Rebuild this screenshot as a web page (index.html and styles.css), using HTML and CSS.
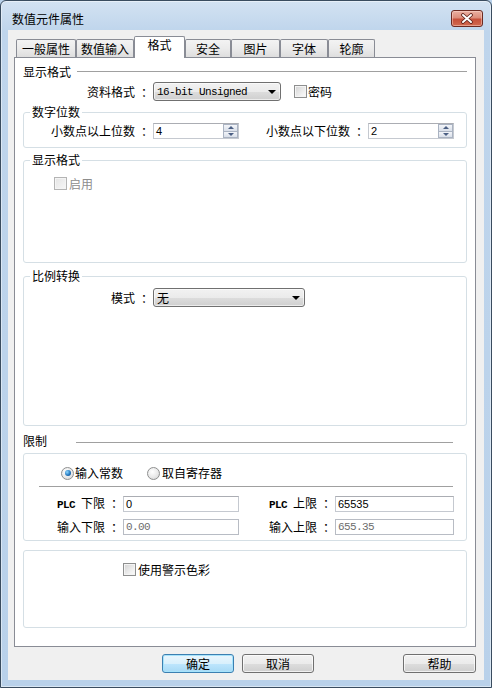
FILE: index.html
```html
<!DOCTYPE html>
<html lang="zh-CN">
<head>
<meta charset="utf-8">
<title>数值元件属性</title>
<link rel="stylesheet" href="styles.css">
</head>
<body>
<div class="win">
  <div class="titlebar">
    <span class="title">数值元件属性</span>
    <div class="close">
      <svg width="14" height="11" viewBox="0 0 14 11">
        <path d="M3 2 L11 9 M11 2 L3 9" stroke="#5a1f18" stroke-width="3.6" stroke-linecap="round" fill="none"/>
        <path d="M3 2 L11 9 M11 2 L3 9" stroke="#ffffff" stroke-width="2" stroke-linecap="round" fill="none"/>
      </svg>
    </div>
  </div>
  <div class="client">
    <div class="tabs">
      <div class="tab w1">一般属性</div>
      <div class="tab w2">数值输入</div>
      <div class="tab sel w3">格式</div>
      <div class="tab w4">安全</div>
      <div class="tab w5">图片</div>
      <div class="tab w6">字体</div>
      <div class="tab w7">轮廓</div>
    </div>
    <div class="panel">
      <div class="heading h-top"><span>显示格式</span><i class="rule r-top"></i></div>
      <div class="row r-fmt">
        <span class="lbl l-fmt">资料格式&ensp;：</span>
        <div class="select s-fmt"><span class="mono">16-bit Unsigned</span><i class="arrow"></i></div>
        <span class="chk c-pwd"></span><span class="chk-text">密码</span>
      </div>
      <fieldset class="grp g-digits">
        <legend>数字位数</legend>
        <div class="row r-digits">
          <span class="lbl l-dig">小数点以上位数&ensp;：</span>
          <div class="spin"><span class="val num">4</span><div class="spinbtn"><span class="half"><i class="up"></i></span><span class="half"><i class="dn"></i></span></div></div>
          <span class="lbl l-dig">小数点以下位数&ensp;：</span>
          <div class="spin"><span class="val num">2</span><div class="spinbtn"><span class="half"><i class="up"></i></span><span class="half"><i class="dn"></i></span></div></div>
        </div>
      </fieldset>
      <fieldset class="grp g-show">
        <legend>显示格式</legend>
        <div class="body b-show">
          <div class="row r-enable"><span class="chk dis"></span><span class="chk-text dis-text">启用</span></div>
        </div>
      </fieldset>
      <fieldset class="grp g-scale">
        <legend>比例转换</legend>
        <div class="body b-scale">
          <div class="row r-mode">
            <span class="lbl l-dig">模式&ensp;：</span>
            <div class="select s-mode"><span>无</span><i class="arrow"></i></div>
          </div>
        </div>
      </fieldset>
      <div class="heading h-lim"><span>限制</span><i class="rule r-lim"></i></div>
      <fieldset class="grp g-limit">
        <div class="body b-limit">
          <div class="row r-radio">
            <span class="radio on r1"></span><span class="radio-text">输入常数</span>
            <span class="radio r2"></span><span class="radio-text t2">取自寄存器</span>
          </div>
          <div class="sep"></div>
          <div class="row r-lim1">
            <span class="lbl l-lim"><span class="mono plc">PLC</span>&ensp;下限&ensp;：</span>
            <div class="edit e-left"><span class="num">0</span></div>
            <span class="lbl l-lim2"><span class="mono plc">PLC</span>&ensp;上限&ensp;：</span>
            <div class="edit e-right"><span class="num">65535</span></div>
          </div>
          <div class="row r-lim2">
            <span class="lbl l-lim">输入下限&ensp;：</span>
            <div class="edit e-left ro"><span class="mono gray">0.00</span></div>
            <span class="lbl l-lim2">输入上限&ensp;：</span>
            <div class="edit e-right ro"><span class="mono gray">655.35</span></div>
          </div>
        </div>
      </fieldset>
      <fieldset class="grp g-warn">
        <div class="body b-warn">
          <div class="row r-warn"><span class="chk c-warn"></span><span class="chk-text">使用警示色彩</span></div>
        </div>
      </fieldset>
    </div>
    <div class="buttons">
      <div class="btn default b-ok">确定</div>
      <div class="btn b-cancel">取消</div>
      <div class="btn b-help">帮助</div>
    </div>
  </div>
</div>
</body>
</html>
```

FILE: styles.css
```css
* { box-sizing: border-box; margin: 0; padding: 0; }
html, body { width: 492px; height: 688px; overflow: hidden; }
body {
  font-family: "Noto Sans CJK SC", "Noto Sans", sans-serif;
  font-size: 12px;
  line-height: 14px;
  color: #000;
  background: #b9d1ea;
}
.win {
  width: 492px;
  height: 688px;
  border: 1px solid #3a4c5f;
  border-radius: 6px 6px 0 0;
  background: linear-gradient(180deg, #d3e2f2 0, #bfd5ec 30px, #b9d1ea 100%);
  box-shadow: inset 0 0 0 1px rgba(255,255,255,.45);
  display: flex;
  flex-direction: column;
}
.titlebar { height: 29px; flex: none; display: flex; align-items: flex-start; }
.title { flex: 1; padding: 11px 0 0 11px; color: #000; }
.close {
  width: 32px; height: 17px; margin: 9px 8px 0 0;
  border: 1px solid #6b2a22; border-radius: 3px;
  background: linear-gradient(180deg, #eab0a2 0, #dc8d7b 45%, #c6503a 55%, #d26a50 100%);
  box-shadow: inset 0 0 0 1px rgba(255,225,215,.45);
  display: flex; align-items: center; justify-content: center;
}
.client {
  flex: 1;
  margin: 0 7px 7px;
  background: #f0f0f0;
  padding: 6px 8px 0 6px;
  display: flex;
  flex-direction: column;
}
.tabs {
  height: 21px; flex: none;
  display: flex; align-items: flex-end;
  padding-left: 2px;
  position: relative; z-index: 1;
}
.tab {
  height: 18px;
  border: 1px solid #898c95; border-bottom: none;
  border-radius: 2px 2px 0 0;
  background: linear-gradient(180deg, #f3f3f3 0, #ebebeb 50%, #dedede 100%);
  text-align: center; line-height: 17px;
  flex: none;
}
.tab.sel { height: 22px; margin-bottom: -1px; background: #fff; line-height: 14px; padding-top: 1px; }
.w1 { width: 60px; }
.w2 { width: 58px; }
.w3 { width: 51px; }
.w4 { width: 46px; }
.w5 { width: 49px; }
.w6 { width: 48px; }
.w7 { width: 47px; }

.panel {
  height: 590px; flex: none;
  border: 1px solid #898c95;
  background: #fff;
  padding: 0 8px;
  display: flex; flex-direction: column;
}
.heading { height: 14px; display: flex; align-items: center; flex: none; }
.h-top { margin-top: 7px; }
.h-lim { margin-top: 8px; }
.rule { flex: 1; height: 2px; border-top: 1px solid #a0a0a0; border-bottom: 1px solid #fff; }
.r-top { margin-left: 6px; }
.r-lim { margin-left: 29px; margin-right: 14px; margin-top: 3px; }

.row { display: flex; align-items: center; flex: none; }
.lbl { flex: none; text-align: right; white-space: nowrap; }
.mono { font-family: "Liberation Mono", monospace; font-size: 11px; letter-spacing: -0.6px; }
.plc { font-weight: bold; font-size: 11px; }
.num { font-family: "Liberation Sans", Arial, sans-serif; font-size: 11px; }
.gray { color: #6d6d6d; }

.r-fmt { margin-top: 3px; height: 19px; }
.l-fmt { width: 130px; }
.select {
  height: 19px; flex: none;
  border: 1px solid #707070; border-radius: 3px;
  background: linear-gradient(180deg, #f2f2f2 0, #ebebeb 50%, #dddddd 51%, #cfcfcf 100%);
  box-shadow: inset 0 0 0 1px rgba(255,255,255,.6);
  display: flex; align-items: center;
  padding: 0 4px 0 3px;
}
.select > span:first-child { flex: 1; line-height: 16px; }
.s-fmt { width: 128px; }
.s-mode { width: 152px; }
.arrow { width: 0; height: 0; border-left: 4px solid transparent; border-right: 4px solid transparent; border-top: 4px solid #000; flex: none; }

.chk {
  width: 13px; height: 13px; flex: none;
  border: 1px solid #8e8f8f;
  background: linear-gradient(135deg, #d2d2d2 0, #f2f2f2 70%, #fbfbfb 100%);
  box-shadow: inset 0 0 0 1px #f4f4f4;
}
.chk.dis { border-color: #b4b4b4; background: linear-gradient(135deg, #e4e4e4, #f7f7f7); }
.chk-text { margin-left: 1px; white-space: nowrap; }
.dis-text { color: #8d8d8d; margin-left: 2px; }
.c-pwd { margin-left: 13px; }

.grp { border: 1px solid #d5dfe5; border-radius: 3px; margin: 0; padding: 0; min-width: 0; flex: none; }
.grp legend { margin-left: 6px; padding: 0 2px; line-height: 14px; }

.g-digits { margin-top: 4px; }
.r-digits { margin: 4px 0 8px; height: 16px; }
.l-dig { width: 129px; }
.spin, .edit {
  height: 16px; flex: none;
  border: 1px solid #c5c9d0; border-top-color: #abadb3;
  background: #fff;
  display: flex; align-items: center;
}
.spin { width: 86px; }
.val { flex: 1; padding-left: 2px; line-height: 14px; }
.spinbtn { width: 15px; height: 14px; display: flex; flex-direction: column; flex: none; }
.half {
  flex: 1; display: flex; align-items: center; justify-content: center;
  border: 1px solid #aab3c2;
  background: linear-gradient(180deg, #f3f5f9, #d9dfe9);
}
.half + .half { border-top: none; }
.up { width: 0; height: 0; border-left: 3px solid transparent; border-right: 3px solid transparent; border-bottom: 3px solid #4b5f83; }
.dn { width: 0; height: 0; border-left: 3px solid transparent; border-right: 3px solid transparent; border-top: 3px solid #4b5f83; }

.g-show { margin-top: 5px; }
.b-show { height: 95px; padding-top: 10px; }
.r-enable { height: 13px; padding-left: 30px; }

.g-scale { margin-top: 6px; }
.b-scale { height: 142px; padding-top: 5px; }
.r-mode { height: 19px; }

.g-limit { margin-top: 5px; }
.b-limit { height: 86px; padding-top: 12px; }
.r-radio { height: 14px; }
.radio {
  width: 13px; height: 13px; border-radius: 50%; flex: none;
  border: 1px solid #8e8f8f;
  background: radial-gradient(circle at 40% 35%, #ffffff 0, #e9e9e9 55%, #cfcfcf 100%);
  display: flex; align-items: center; justify-content: center;
}
.radio.on::after {
  content: ""; width: 6px; height: 6px; border-radius: 50%;
  background: radial-gradient(circle at 35% 35%, #8fd8ff 0, #2378c0 55%, #0e3f78 100%);
}
.r1 { margin-left: 37px; }
.r2 { margin-left: 24px; }
.radio-text { margin-left: 1px; }
.t2 { margin-left: 2px; }
.sep { height: 1px; background: #a0a0a0; margin: 6px 13px 0 15px; flex: none; }
.r-lim1 { margin-top: 9px; height: 16px; }
.r-lim2 { margin-top: 7px; height: 16px; }
.l-lim { width: 99px; }
.l-lim2 { width: 96px; }
.edit { padding-left: 2px; }
.e-left { width: 116px; }
.e-right { width: 119px; }
.edit.ro { border-color: #b8bcc4; }

.g-warn { margin-top: 9px; }
.b-warn { height: 76px; padding-top: 12px; }
.r-warn { height: 13px; padding-left: 99px; }
.r-warn .chk-text { margin-left: 2px; }

.buttons { margin-top: 7px; height: 19px; display: flex; flex: none; }
.btn {
  height: 19px; flex: none;
  border: 1px solid #707070; border-radius: 3px;
  background: linear-gradient(180deg, #f2f2f2 0, #ebebeb 50%, #dddddd 51%, #cfcfcf 100%);
  box-shadow: inset 0 0 0 1px rgba(255,255,255,.7);
  text-align: center; line-height: 17px;
}
.btn.default {
  border-color: #3c7fb1;
  background: linear-gradient(180deg, #eaf6fd 0, #d9f0fc 50%, #bee6fd 51%, #a7d9f5 100%);
  box-shadow: inset 0 0 0 1px #a6e3fb;
}
.b-ok { width: 72px; margin-left: 148px; }
.b-cancel { width: 72px; margin-left: 8px; }
.b-help { width: 73px; margin-left: auto; }
```
